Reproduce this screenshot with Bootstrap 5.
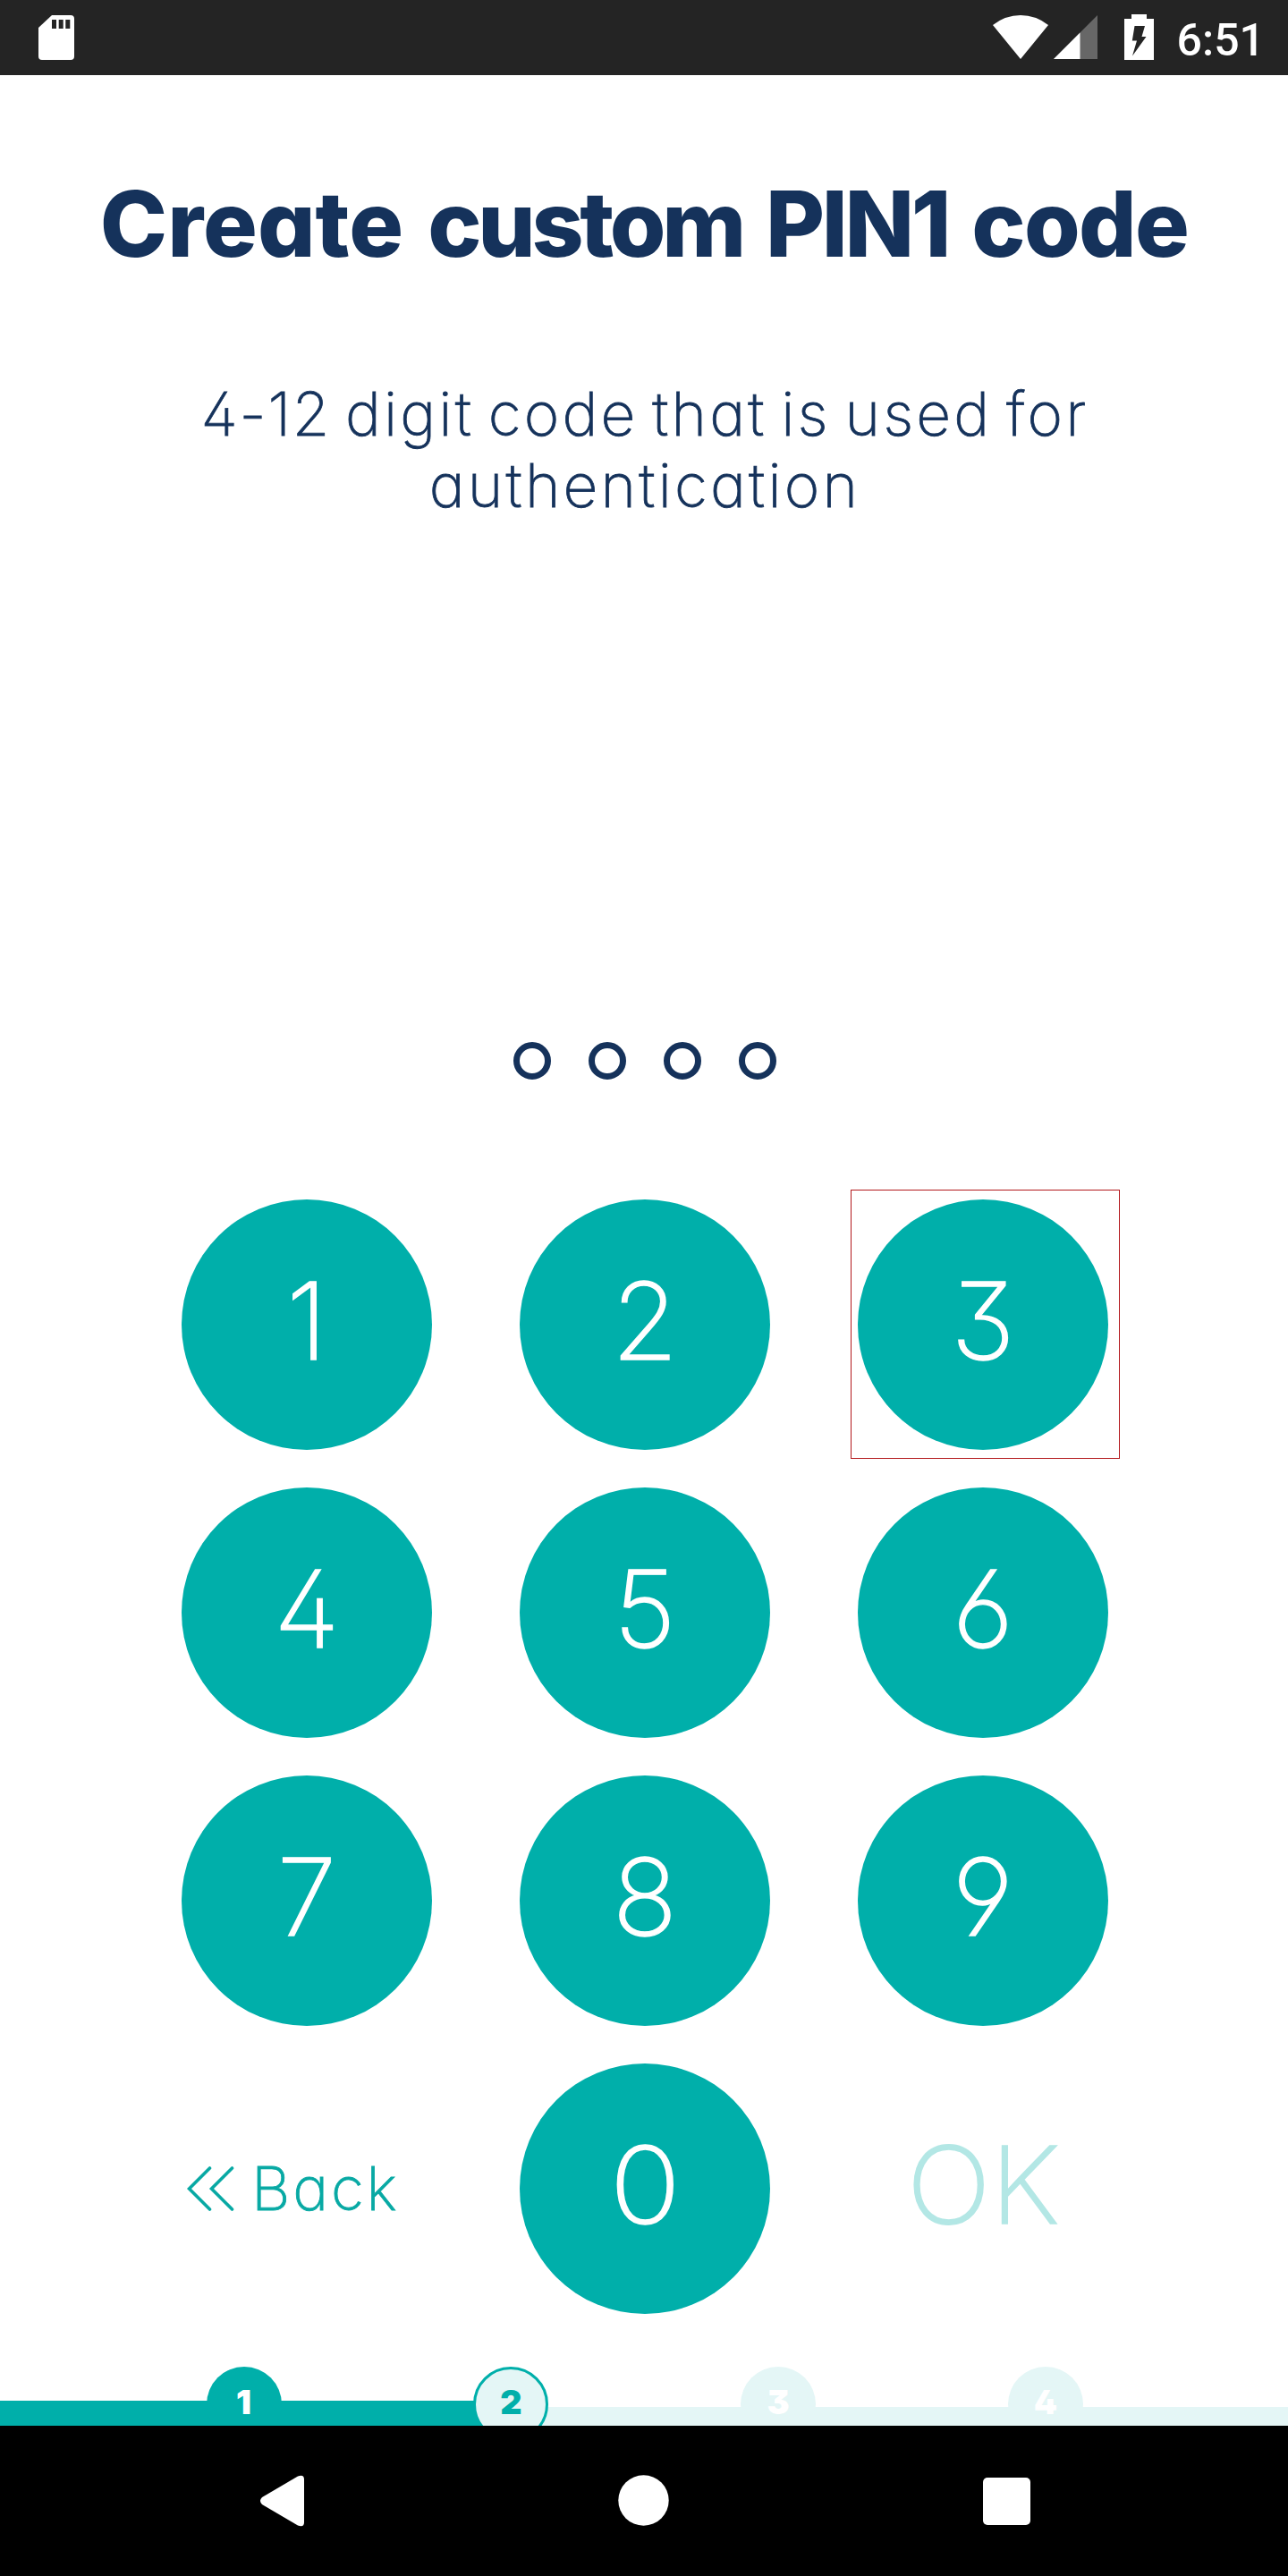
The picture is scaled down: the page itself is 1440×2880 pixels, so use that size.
<!DOCTYPE html>
<html lang="en">
<head>
<meta charset="utf-8">
<meta name="viewport" content="width=device-width, initial-scale=1">
<title>Create custom PIN1 code</title>
<link rel="stylesheet" href="https://cdn.jsdelivr.net/npm/bootstrap@5.3.0/dist/css/bootstrap.min.css">
<style>
  :root { --teal: #00afaa; --pale: #e4f6f6; --navy: #15325b; }
  body, .key { font-family: Inter, "Open Sans", sans-serif; font-feature-settings: "cv02", "cv03", "cv04", "cv09", "cv11"; }
  body { color: var(--navy); }
  .screen { width: 1440px; height: 2880px; }
  .statusbar { height: 84px; background: #242424; padding: 0 34px 0 43px; }
  .clock { font: 500 50px/1 Roboto, sans-serif; margin: 0 -8px 0 26px; padding-top: 5px; }
  .headline { font-size: 101.4px; font-weight: 800; line-height: 120px; letter-spacing: -1.1px; margin: 106px 0 0; white-space: nowrap; }
  .word-a { letter-spacing: 0; margin-right: 6px; }
  .word-b { letter-spacing: -4.3px; margin-right: 5px; }
  .word-c { letter-spacing: -3.3px; margin-right: 5px; }
  .word-d { letter-spacing: -1.7px; }
  .subline { font-size: 67.4px; font-weight: 200; line-height: 80px; letter-spacing: 3.2px; word-spacing: -6.5px; margin-top: 113px; width: 1060px; -webkit-text-stroke: .8px; padding-left: 2px; }
  .digit-range { letter-spacing: 1.8px; }
  .pin-dots { gap: 42px; margin-top: 582px; padding-left: 2px; }
  .pin-dot { width: 42px; height: 42px; border: 7px solid var(--navy); }
  .keypad { display: grid; grid-template-columns: repeat(3, 280px); grid-auto-rows: 280px; gap: 42px 98px; margin: 133.5px 0 0 203px; }
  .key { --bs-btn-bg: var(--teal); --bs-btn-color: #fff; --bs-btn-border-width: 0; --bs-btn-padding-x: 0; --bs-btn-padding-y: 0;
         --bs-btn-font-size: 119.8px; --bs-btn-font-weight: 200; --bs-btn-line-height: 1; padding-bottom: 8px; -webkit-text-stroke: 1.4px; }
  .key-plain { --bs-btn-bg: transparent; }
  .key-ok { --bs-btn-disabled-color: #b3e7e5; --bs-btn-disabled-bg: transparent; --bs-btn-disabled-opacity: 1; white-space: nowrap; }
  .wide-glyphs { display: inline-block; transform: scaleX(1.04); }
  .wide-zero { display: inline-block; transform: scaleX(1.1); }
  .key-back { --bs-btn-color: #08a9a4; --bs-btn-font-size: 67.4px; padding: 0 0 0 6px; gap: 19px; letter-spacing: 2.8px; -webkit-text-stroke: .8px; }
  .focus-frame { top: -11px; left: -8px; width: 301px; height: 301px; border: 1px solid #b3191d; pointer-events: none; }
  .steps { height: 66px; margin-top: 59.5px; }
  .track-done { top: 38px; left: 0; width: 560px; height: 28px; background: var(--teal); }
  .track-todo { top: 45px; right: 0; width: 880px; height: 21px; background: var(--pale); }
  .step-list { gap: 214.800px; padding: 0 0 0 230.5px; }
  .step { width: 84px; height: 84px; flex: none; background: var(--pale); color: #fff; font-size: 37.6px; font-weight: 900; padding-bottom: 4px; }
  .step-done { background: var(--teal); }
  .step-now { color: var(--teal); border: 3.5px solid var(--teal); }
  .sysnav { height: 168px; padding: 0 288px; }
</style>
<script src="https://cdn.jsdelivr.net/npm/bootstrap@5.3.0/dist/js/bootstrap.bundle.min.js"></script>
</head>
<body class="bg-white">
<div class="screen d-flex flex-column overflow-hidden">

  <header class="statusbar d-flex align-items-center text-white flex-shrink-0">
    <svg width="40" height="50" viewBox="0 0 40 50" aria-hidden="true">
      <path fill="#fff" d="M15 0H36Q40 0 40 4V46Q40 50 36 50H4Q0 50 0 46V14Z"/>
      <path fill="#242424" d="M15 5h5v10h-5zM22.700 5h5v10h-5zM30.300 5h5v10h-5z"/>
    </svg>
    <svg class="ms-auto" width="62" height="50" viewBox="0 0 62 50" aria-hidden="true"><path fill="#fff" d="M31 49L0 11Q14 0 31 0T62 11Z"/></svg>
    <svg style="margin-left:6px" width="49" height="50" viewBox="0 0 49 50" aria-hidden="true"><path fill="#676767" d="M49 0V49H0Z"/><path fill="#fff" d="M29.500 19.500V49H0Z"/></svg>
    <svg style="margin-left:30px" width="33" height="52" viewBox="0 0 33 52" aria-hidden="true">
      <path fill="#fff" d="M8 0H25V5H33V51H0V5H8Z"/>
      <path fill="#242424" d="M11.500 13H23L19.500 25H24.500L9 46.500L14 29.500H8.800Z"/>
    </svg>
    <span class="clock">6:51</span>
  </header>

  <main class="d-flex flex-column flex-grow-1">
    <h1 class="headline text-center"><span class="word-a">Create</span> <span class="word-b">custom</span> <span class="word-c">PIN1</span> <span class="word-d">code</span></h1>
    <p class="subline text-center mx-auto mb-0"><span class="digit-range">4-12</span> digit code that is used for authentication</p>

    <div class="pin-dots d-flex justify-content-center">
      <span class="pin-dot rounded-circle"></span><span class="pin-dot rounded-circle"></span><span class="pin-dot rounded-circle"></span><span class="pin-dot rounded-circle"></span>
    </div>

    <div class="keypad">
      <button class="btn key rounded-circle">1</button>
      <button class="btn key rounded-circle">2</button>
      <div class="position-relative d-grid">
        <button class="btn key rounded-circle">3</button>
        <span class="focus-frame position-absolute"></span>
      </div>
      <button class="btn key rounded-circle">4</button>
      <button class="btn key rounded-circle">5</button>
      <button class="btn key rounded-circle">6</button>
      <button class="btn key rounded-circle">7</button>
      <button class="btn key rounded-circle">8</button>
      <button class="btn key rounded-circle">9</button>
      <button class="btn key key-plain key-back d-flex align-items-center">
        <svg width="53" height="50" viewBox="0 0 53 50" fill="none" stroke="currentColor" stroke-width="3.600" stroke-linecap="round" aria-hidden="true"><path d="M25.500 2L2.500 25L25.500 48M50.500 2L27.500 25L50.500 48"/></svg>
        <span>Back</span>
      </button>
      <button class="btn key rounded-circle"><span class="wide-zero">0</span></button>
      <button class="btn key key-plain key-ok" disabled><span class="wide-glyphs">OK</span></button>
    </div>

    <div class="steps position-relative overflow-hidden">
      <span class="track-todo position-absolute"></span>
      <span class="track-done position-absolute"></span>
      <div class="step-list position-relative d-flex">
        <span class="step step-done rounded-circle d-flex align-items-center justify-content-center">1</span>
        <span class="step step-now rounded-circle d-flex align-items-center justify-content-center">2</span>
        <span class="step rounded-circle d-flex align-items-center justify-content-center">3</span>
        <span class="step rounded-circle d-flex align-items-center justify-content-center">4</span>
      </div>
    </div>
  </main>

  <nav class="sysnav bg-black d-flex align-items-center justify-content-between flex-shrink-0">
    <svg width="52" height="58" viewBox="0 0 52 58" aria-hidden="true"><path fill="#fff" d="M5 25L45 1.500Q52 -1 52 5V53Q52 59 45 56.500L5 33Q1 29 5 25Z"/></svg>
    <svg width="57" height="58" viewBox="0 0 57 58" aria-hidden="true"><circle cx="28.500" cy="28.500" r="28.200" fill="#fff"/></svg>
    <svg width="53" height="53" viewBox="0 0 53 53" aria-hidden="true"><rect width="53" height="53" rx="5" fill="#fff"/></svg>
  </nav>
</div>
</body>
</html>
